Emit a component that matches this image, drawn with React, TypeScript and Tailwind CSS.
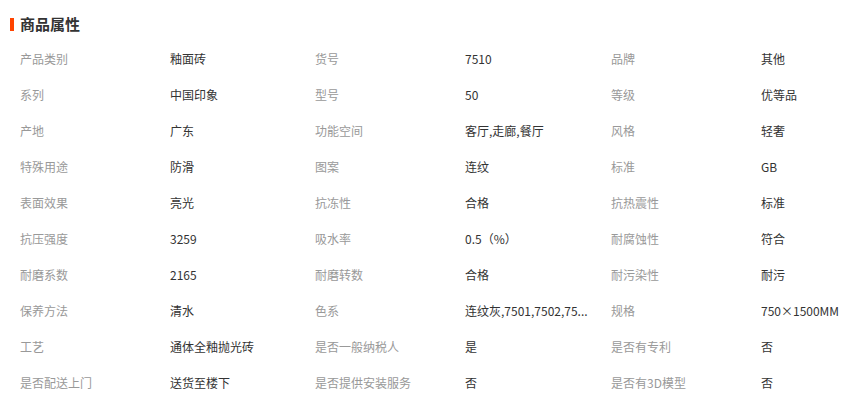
import React from "react";

const rows: string[][] = [
  ["产品类别", "釉面砖", "货号", "7510", "品牌", "其他"],
  ["系列", "中国印象", "型号", "50", "等级", "优等品"],
  ["产地", "广东", "功能空间", "客厅,走廊,餐厅", "风格", "轻奢"],
  ["特殊用途", "防滑", "图案", "连纹", "标准", "GB"],
  ["表面效果", "亮光", "抗冻性", "合格", "抗热震性", "标准"],
  ["抗压强度", "3259", "吸水率", "0.5（%）", "耐腐蚀性", "符合"],
  ["耐磨系数", "2165", "耐磨转数", "合格", "耐污染性", "耐污"],
  ["保养方法", "清水", "色系", "连纹灰,7501,7502,75...", "规格", "750×1500MM"],
  ["工艺", "通体全釉抛光砖", "是否一般纳税人", "是", "是否有专利", "否"],
  ["是否配送上门", "送货至楼下", "是否提供安装服务", "否", "是否有3D模型", "否"],
];

export default function App() {
  return (
    <div
      className="w-[864px] h-[397px] bg-white overflow-hidden"
      style={{ fontFamily: '"Microsoft YaHei", Tahoma, "Noto Sans CJK SC", sans-serif' }}
    >
      <div className="flex items-center h-[41px] pt-[7px] pl-[10px]">
        <div className="w-[4px] h-[13px] bg-[#ff4400] mr-[6px]" />
        <div className="text-[15px] leading-[20px] font-bold text-[#333]">商品属性</div>
      </div>
      <div className="pl-[20px] grid grid-cols-[150px_145px_150px_146px_150px_1fr] auto-rows-[36px] text-[12px]">
        {rows.map((r, i) =>
          r.map((c, j) => (
            <div
              key={`${i}-${j}`}
              className={`flex items-center min-w-0 whitespace-nowrap ${j % 2 === 0 ? "text-[#999]" : "text-[#333]"}`}
            >
              <span>{c}</span>
            </div>
          ))
        )}
      </div>
    </div>
  );
}
